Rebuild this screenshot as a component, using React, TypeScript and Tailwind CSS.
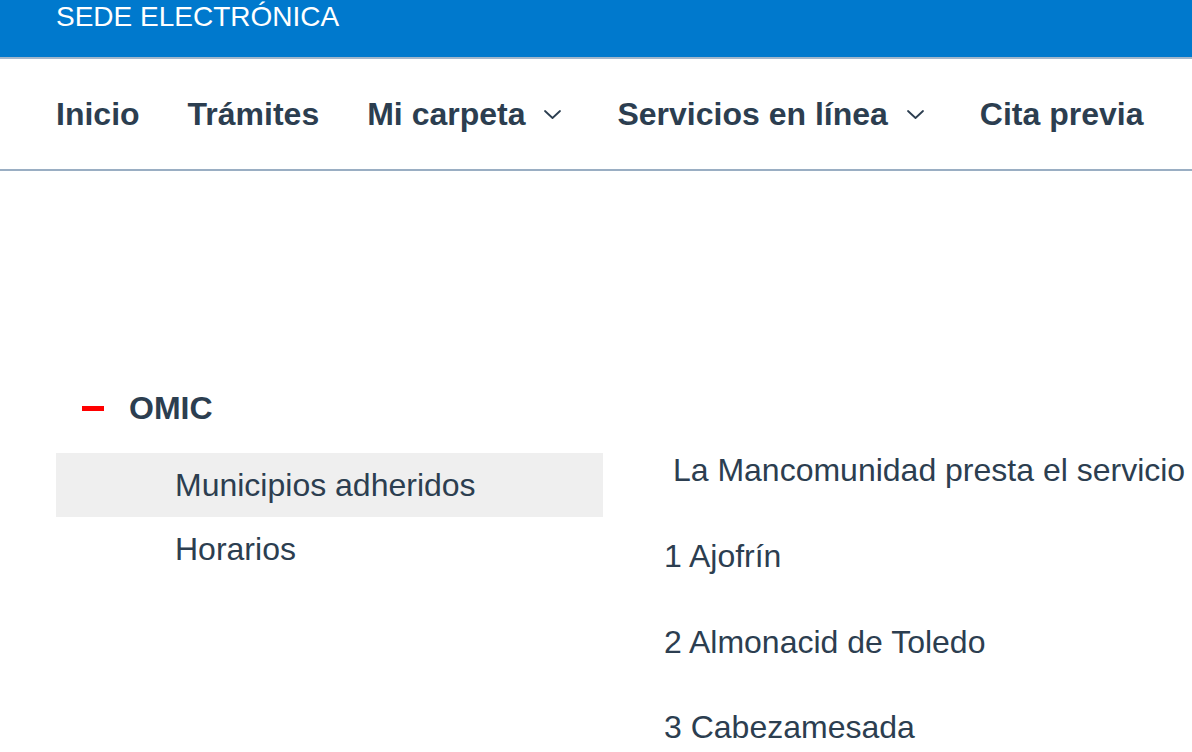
const navItems = [
  { label: "Inicio", menu: false },
  { label: "Trámites", menu: false },
  { label: "Mi carpeta", menu: true },
  { label: "Servicios en línea", menu: true },
  { label: "Cita previa", menu: false },
];

const municipios = ["1 Ajofrín", "2 Almonacid de Toledo", "3 Cabezamesada"];

function Chevron() {
  return (
    <svg width="17" height="9" viewBox="0 0 17 9" fill="none" className="ml-[19px] mr-[8px] shrink-0">
      <path d="M1 1l7.5 7 7.5-7" stroke="#2c3e50" strokeWidth="1.8" strokeLinecap="round" strokeLinejoin="round" />
    </svg>
  );
}

export default function App() {
  return (
    <div className="h-[752px] overflow-hidden bg-white font-['Liberation_Sans',Arial,Helvetica,sans-serif] text-[#2c3e50]">
      <header>
        <div className="h-[57px] bg-[#0079cd] pl-[56px] pt-[1px]">
          <span className="text-[28px] leading-[32px] text-white">SEDE ELECTRÓNICA</span>
        </div>
        <div className="h-[2px] bg-[#a3b7cb]" />
        <nav className="flex h-[112px] items-center border-b-2 border-[#9aaec3] pl-[56px]">
          <ul className="flex items-center gap-[48px]">
            {navItems.map((item) => (
              <li key={item.label} className="flex items-center">
                <a href="#" className="whitespace-nowrap text-[32px] font-bold leading-[36px]">
                  {item.label}
                </a>
                {item.menu && <Chevron />}
              </li>
            ))}
          </ul>
        </nav>
      </header>

      <main className="flex pl-[56px]">
        <aside className="w-[547px] shrink-0 pt-[219px]">
          <div className="flex h-[36px] items-center pl-[26px]">
            <span className="h-[5px] w-[22px] bg-[#ff0000]" />
            <h2 className="ml-[25px] text-[32px] font-bold leading-[36px]">OMIC</h2>
          </div>
          <ul className="mt-[27px]">
            <li className="h-[64px] bg-[#efefef] pl-[119px] text-[32px] leading-[64px]">
              Municipios adheridos
            </li>
            <li className="h-[64px] pl-[119px] text-[32px] leading-[64px]">Horarios</li>
          </ul>
        </aside>

        <section className="ml-[61px] min-w-0 flex-1 pt-[275px] text-[32px] leading-[48px]">
          <p className="mb-[38px] whitespace-nowrap">&nbsp;La Mancomunidad presta el servicio</p>
          <div className="flex flex-col gap-[37.5px]">
            {municipios.map((m) => (
              <p key={m} className="whitespace-nowrap">
                {m}
              </p>
            ))}
          </div>
        </section>
      </main>
    </div>
  );
}
